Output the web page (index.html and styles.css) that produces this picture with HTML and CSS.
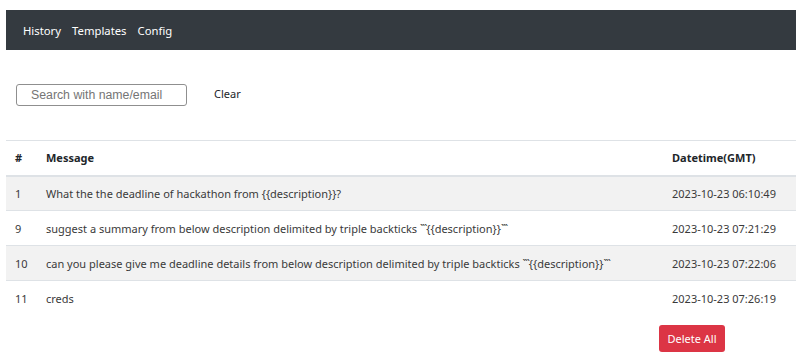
FILE: index.html
```html
<!DOCTYPE html>
<html lang="en">
<head>
    <meta charset="UTF-8">
    <title>Prompt History</title>
    <link rel="stylesheet" href="styles.css">
</head>
<body>
    <div class="page">
        <nav class="navbar">
            <a href="#">History</a>
            <a href="#">Templates</a>
            <a href="#">Config</a>
        </nav>

        <div class="search-bar">
            <input type="text" class="search-input" placeholder="Search with name/email">
            <button class="clear-btn">Clear</button>
        </div>

        <table class="history">
            <colgroup>
                <col class="col-id">
                <col class="col-msg">
                <col class="col-date">
            </colgroup>
            <thead>
                <tr>
                    <th>#</th>
                    <th>Message</th>
                    <th>Datetime(GMT)</th>
                </tr>
            </thead>
            <tbody>
                <tr>
                    <td>1</td>
                    <td>What the the deadline of hackathon from {{description}}?</td>
                    <td>2023-10-23 06:10:49</td>
                </tr>
                <tr>
                    <td>9</td>
                    <td>suggest a summary from below description delimited by triple backticks <span class="ticks">```</span>{{description}}<span class="ticks">```</span></td>
                    <td>2023-10-23 07:21:29</td>
                </tr>
                <tr>
                    <td>10</td>
                    <td>can you please give me deadline details from below description delimited by triple backticks <span class="ticks">```</span>{{description}}<span class="ticks">```</span></td>
                    <td>2023-10-23 07:22:06</td>
                </tr>
                <tr>
                    <td>11</td>
                    <td>creds</td>
                    <td>2023-10-23 07:26:19</td>
                </tr>
            </tbody>
        </table>

        <div class="actions">
            <button class="delete-all">Delete All</button>
        </div>
    </div>
</body>
</html>
```

FILE: styles.css
```css
* {
    margin: 0;
    padding: 0;
    box-sizing: border-box;
}

body {
    font-family: 'Noto Sans', 'Open Sans', sans-serif;
    font-size: 11px;
    color: #212529;
    background: #fff;
}

.page {
    padding: 10px 10px 0 6px;
}

.navbar {
    display: flex;
    align-items: center;
    gap: 11px;
    height: 40px;
    padding: 0 17px;
    background-color: #343a40;
}

.navbar a {
    color: #fff;
    text-decoration: none;
    font-size: 11.3px;
}

.search-bar {
    display: flex;
    align-items: center;
    margin-top: 34px;
    padding-left: 10px;
}

.search-input {
    width: 171px;
    height: 22px;
    padding: 0 14px;
    border: 1px solid #8f8f8f;
    border-radius: 3px;
    font-family: 'Liberation Sans', Arial, sans-serif;
    font-size: 12.3px;
    color: #212529;
}

.search-input::placeholder {
    color: #757575;
}

.clear-btn {
    margin-left: 27px;
    margin-top: -4px;
    border: none;
    background: none;
    font-family: inherit;
    font-size: 11px;
    color: #212529;
    cursor: pointer;
}

.history {
    width: 790px;
    margin-top: 34px;
    border-collapse: collapse;
    table-layout: fixed;
}

.col-id { width: 31px; }
.col-date { width: 133px; }

.history th,
.history td {
    height: 35px;
    padding: 0 9px;
    text-align: left;
    vertical-align: middle;
    white-space: nowrap;
    border-top: 1px solid #dee2e6;
}

.history th {
    font-weight: bold;
    border-bottom: 2px solid #dee2e6;
}

.history td {
    color: #3a3a3a;
}

.history tbody tr:nth-child(odd) {
    background-color: #f2f2f2;
}

/* backticks render narrow in the original font */
.ticks {
    letter-spacing: -1px;
}

.actions {
    display: flex;
    justify-content: flex-end;
    padding-right: 71px;
    margin-top: 9px;
}

.delete-all {
    width: 66px;
    height: 27px;
    border: none;
    border-radius: 3px;
    background-color: #dc3545;
    color: #fff;
    font-family: inherit;
    font-size: 11px;
    cursor: pointer;
}
```
